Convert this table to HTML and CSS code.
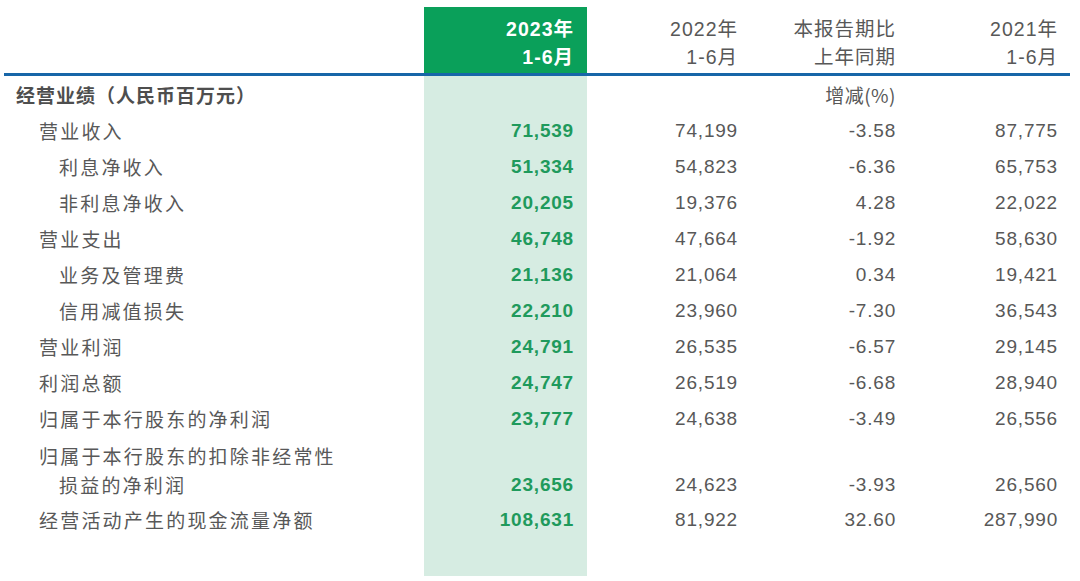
FILE: index.html
```html
<!DOCTYPE html>
<html lang="zh-CN">
<head>
<meta charset="utf-8">
<title>经营业绩</title>
<link rel="stylesheet" href="styles.css">
</head>
<body>
<div class="wrap">
<table class="fin">
  <colgroup>
    <col class="c-label"><col class="c-cur"><col class="c-prev"><col class="c-chg"><col class="c-old">
  </colgroup>
  <thead>
    <tr>
      <th class="label"></th>
      <th class="cur"><span class="ln">2023年</span><span class="ln">1-6月</span></th>
      <th><span class="ln">2022年</span><span class="ln">1-6月</span></th>
      <th><span class="ln">本报告期比</span><span class="ln">上年同期</span></th>
      <th><span class="ln">2021年</span><span class="ln">1-6月</span></th>
    </tr>
  </thead>
  <tbody>
    <tr class="first">
      <td class="label lv0">经营业绩（人民币百万元）</td>
      <td class="cur"></td>
      <td></td>
      <td class="cjk">增减(%)</td>
      <td></td>
    </tr>
    <tr><td class="label lv1">营业收入</td><td class="cur">71,539</td><td>74,199</td><td>-3.58</td><td>87,775</td></tr>
    <tr><td class="label lv2">利息净收入</td><td class="cur">51,334</td><td>54,823</td><td>-6.36</td><td>65,753</td></tr>
    <tr><td class="label lv2">非利息净收入</td><td class="cur">20,205</td><td>19,376</td><td>4.28</td><td>22,022</td></tr>
    <tr><td class="label lv1">营业支出</td><td class="cur">46,748</td><td>47,664</td><td>-1.92</td><td>58,630</td></tr>
    <tr><td class="label lv2">业务及管理费</td><td class="cur">21,136</td><td>21,064</td><td>0.34</td><td>19,421</td></tr>
    <tr><td class="label lv2">信用减值损失</td><td class="cur">22,210</td><td>23,960</td><td>-7.30</td><td>36,543</td></tr>
    <tr><td class="label lv1">营业利润</td><td class="cur">24,791</td><td>26,535</td><td>-6.57</td><td>29,145</td></tr>
    <tr><td class="label lv1">利润总额</td><td class="cur">24,747</td><td>26,519</td><td>-6.68</td><td>28,940</td></tr>
    <tr><td class="label lv1">归属于本行股东的净利润</td><td class="cur">23,777</td><td>24,638</td><td>-3.49</td><td>26,556</td></tr>
    <tr class="two">
      <td class="label lv1"><span class="ln">归属于本行股东的扣除非经常性</span><span class="ln sub">损益的净利润</span></td>
      <td class="cur">23,656</td><td>24,623</td><td>-3.93</td><td>26,560</td>
    </tr>
    <tr><td class="label lv1">经营活动产生的现金流量净额</td><td class="cur">108,631</td><td>81,922</td><td>32.60</td><td>287,990</td></tr>
    <tr class="tail"><td class="label"></td><td class="cur"></td><td></td><td></td><td></td></tr>
  </tbody>
</table>
</div>
</body>
</html>
```

FILE: styles.css
```css
html, body {
  margin: 0;
  padding: 0;
  background: #ffffff;
}

.wrap {
  padding: 7px 0 0 4px;
}

.fin {
  border-collapse: collapse;
  table-layout: fixed;
  width: 1066px;
  font-family: "Liberation Sans", "Noto Sans CJK SC", sans-serif;
  color: #585858;
  font-size: 19px;
}

.c-label { width: 420px; }
.c-cur { width: 163px; }
.c-prev { width: 163px; }
.c-chg { width: 158px; }
.c-old { width: 162px; }

.fin th,
.fin td {
  padding: 0 12px 0 0;
  text-align: right;
  white-space: nowrap;
  letter-spacing: 0.8px;
}

.fin th.cur,
.fin td.cur {
  padding-right: 13px;
}

.fin thead th {
  height: 67px;
  vertical-align: bottom;
  padding-bottom: 2px;
  font-weight: normal;
  font-size: 19.5px;
  line-height: 28px;
  letter-spacing: 1px;
  border-bottom: 3px solid #1766a8;
  box-sizing: border-box;
}

.fin thead th.cur {
  background: #0aa05a;
  color: #ffffff;
  font-weight: bold;
}

.ln {
  display: block;
}

.fin tbody td {
  height: 36px;
  line-height: 36px;
  vertical-align: middle;
}

.fin tbody td.cur {
  background: #d6ece2;
  color: #1f9a5c;
  font-weight: bold;
}

.fin tbody tr.first td {
  height: 37px;
  line-height: 37px;
}

.fin td.label {
  text-align: left;
  padding-right: 0;
  font-family: "Noto Sans CJK SC", sans-serif;
  letter-spacing: 2.2px;
}

.fin td.cjk {
  font-family: "Noto Sans CJK SC", sans-serif;
  letter-spacing: 0.5px;
}

.fin td.lv0 {
  padding-left: 12px;
  font-weight: bold;
  letter-spacing: 1px;
  color: #4e4e4e;
}

.fin td.lv1 {
  padding-left: 35px;
}

.fin td.lv2 {
  padding-left: 55px;
}

.fin tbody tr.two td {
  height: 65px;
  line-height: 29px;
  vertical-align: bottom;
  padding-bottom: 3px;
  box-sizing: border-box;
}

.fin tbody tr.two td.label .sub {
  padding-left: 20px;
}

.fin tbody tr.tail td {
  height: 38px;
}
```
